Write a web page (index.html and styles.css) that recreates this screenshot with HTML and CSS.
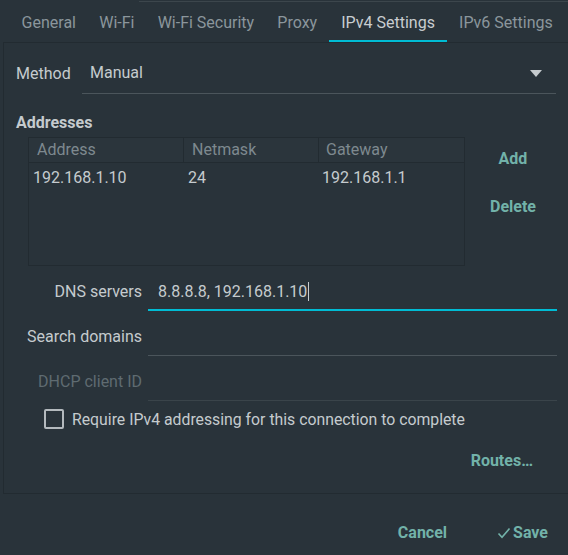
FILE: index.html
```html
<!DOCTYPE html>
<html>
<head>
<meta charset="utf-8">
<link rel="stylesheet" href="styles.css">
</head>
<body>
<div class="topline"></div>
<div class="tabs">
  <div class="tab">General</div>
  <div class="tab">Wi-Fi</div>
  <div class="tab">Wi-Fi Security</div>
  <div class="tab">Proxy</div>
  <div class="tab active">IPv4 Settings</div>
  <div class="tab">IPv6 Settings</div>
</div>
<div class="frame">
  <div class="method">
    <div class="method-label">Method</div>
    <div class="combo">
      <span>Manual</span>
      <svg class="arrow" width="12" height="7" viewBox="0 0 12 7"><path d="M0 0h12L6 7z" fill="#c5cbce"/></svg>
    </div>
  </div>
  <div class="heading">Addresses</div>
  <div class="addr">
    <div class="table">
      <div class="thead">
        <div class="th c1">Address</div>
        <div class="th c2">Netmask</div>
        <div class="th c3">Gateway</div>
      </div>
      <div class="trow">
        <div class="td c1">192.168.1.10</div>
        <div class="td c2">24</div>
        <div class="td c3">192.168.1.1</div>
      </div>
    </div>
    <div class="side">
      <div class="btn add">Add</div>
      <div class="btn del">Delete</div>
    </div>
  </div>
  <div class="fields">
    <div class="flabel">DNS servers</div>
    <div class="entry focus"><span>8.8.8.8, 192.168.1.10</span><span class="caret"></span></div>
    <div class="flabel">Search domains</div>
    <div class="entry"></div>
    <div class="flabel dim">DHCP client ID</div>
    <div class="entry dimline"></div>
  </div>
  <div class="check">
    <div class="box"></div>
    <span>Require IPv4 addressing for this connection to complete</span>
  </div>
  <div class="routes"><span class="btn">Routes…</span></div>
</div>
<div class="actions">
  <span class="btn cancel">Cancel</span>
  <span class="btn save"><svg width="14" height="12" viewBox="0 0 14 12"><path d="M1.5 6.5l3.5 3.8L12.5 1.5" fill="none" stroke="#72b2a9" stroke-width="1.6"/></svg>Save</span>
</div>
</body>
</html>
```
FILE: styles.css
```css
html, body {
  margin: 0;
  padding: 0;
  background: #29333a;
  width: 568px;
  height: 555px;
  overflow: hidden;
  font-family: Roboto, "Liberation Sans", sans-serif;
  font-size: 16px;
  color: #c5cbce;
}
.topline {
  height: 1px;
  margin-top: 1px;
  margin-left: 139px;
  background: #3c464c;
}
.tabs {
  display: flex;
  height: 40px;
  padding-left: 10px;
}
.tab {
  padding: 0 11.6px;
  line-height: 42px;
  color: #8b969c;
  box-sizing: border-box;
  height: 40px;
}
.tab.active {
  color: #c8cdd0;
  border-bottom: 2px solid #00bcd4;
  line-height: 42px;
  padding: 0 12.5px;
}
.frame {
  margin-left: 3px;
  border-left: 1px solid #222b31;
  border-top: 1px solid #222b31;
  border-bottom: 1px solid #222b31;
  height: 452px;
  box-sizing: border-box;
}
.method {
  display: flex;
  align-items: stretch;
  margin-top: 9px;
  height: 42px;
}
.method-label {
  padding-left: 12px;
  width: 66px;
  line-height: 44px;
}
.combo {
  display: flex;
  align-items: center;
  justify-content: space-between;
  width: 474px;
  border-bottom: 1px solid #4b555b;
  padding: 0 14px 0 8px;
  box-sizing: border-box;
}
.combo span { line-height: 44px; }
.combo .arrow { margin-top: 1px; }
.heading {
  font-weight: 700;
  margin-top: 17px;
  line-height: 23px;
  padding-left: 12px;
}
.addr {
  display: flex;
  margin-top: 3px;
  margin-left: 24px;
}
.table {
  width: 437px;
  height: 129px;
  border: 1px solid #222b31;
  box-sizing: border-box;
}
.thead {
  display: flex;
  height: 25px;
  background: #2b353c;
  border-bottom: 1px solid #222b31;
  box-sizing: border-box;
}
.th {
  color: #7e898f;
  line-height: 24px;
  box-sizing: border-box;
  border-right: 1px solid #222b31;
}
.th.c3 { border-right: none; }
.c1 { width: 155px; padding-left: 8px; }
.c2 { width: 135px; padding-left: 8px; }
.c3 { flex: 1; padding-left: 7px; }
.trow {
  display: flex;
  height: 28px;
}
.td {
  line-height: 30px;
  box-sizing: border-box;
}
.td.c1 { padding-left: 4px; }
.td.c2 { padding-left: 4px; }
.td.c3 { padding-left: 3px; }
.side {
  width: 96px;
  display: flex;
  flex-direction: column;
  align-items: center;
  padding-top: 11px;
}
.btn {
  color: #72b2a9;
  font-weight: 700;
  line-height: 22px;
}
.del { margin-top: 26px; }
.fields {
  display: grid;
  grid-template-columns: 138px 409px;
  column-gap: 6px;
  row-gap: 4px;
  margin-top: 5px;
}
.flabel {
  text-align: right;
  line-height: 41px;
}
.flabel.dim { color: #5f6b71; }
.entry {
  height: 40px;
  box-sizing: border-box;
  border-bottom: 1px solid #4b555b;
  padding-left: 10px;
  line-height: 41px;
  display: flex;
  align-items: center;
}
.entry.focus {
  border-bottom: 2px solid #00bcd4;
  padding-top: 2px;
}
.entry.dimline { border-bottom-color: #3a444a; }
.caret {
  display: inline-block;
  width: 1px;
  height: 19px;
  background: #c8cdd0;
  margin-left: 1px;
}
.check {
  display: flex;
  align-items: center;
  margin-top: 7px;
  margin-left: 40px;
  height: 20px;
  font-size: 15.8px;
}
.box {
  width: 20px;
  height: 20px;
  box-sizing: border-box;
  border: 2px solid #b4babe;
  border-radius: 2px;
  margin-right: 8px;
}
.routes {
  margin-top: 21px;
  text-align: right;
  padding-right: 35px;
  line-height: 22px;
}
.actions {
  display: flex;
  justify-content: flex-end;
  align-items: center;
  margin-top: 28px;
  padding-right: 20px;
  height: 22px;
}
.cancel { margin-right: 50px; }
.save { display: flex; align-items: center; gap: 2px; }
```
